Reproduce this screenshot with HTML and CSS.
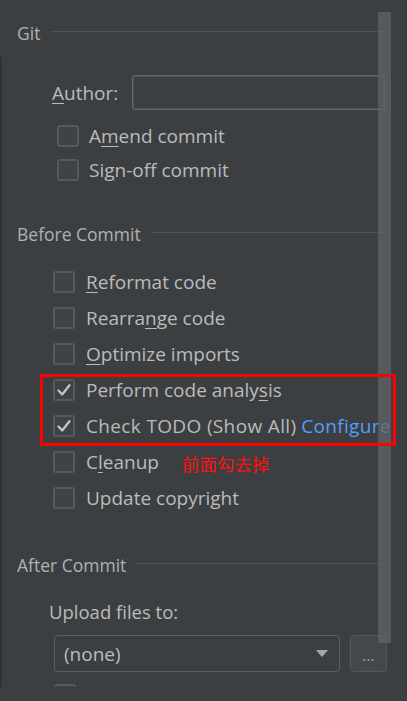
FILE: index.html
```html
<!DOCTYPE html>
<html>
<head>
<meta charset="utf-8">
<link rel="stylesheet" href="styles.css">
</head>
<body>
<div class="viewport">
  <div class="sect-head git-head"><span class="sect-title">Git</span></div>
  <div class="panel">
    <div class="author-row">
      <span class="author-label"><u>A</u>uthor:</span>
      <div class="text-input"></div>
    </div>
    <div class="git-opts">
      <div class="opt git-opt"><span class="cb"></span><span class="opt-text">A<u>m</u>end commit</span></div>
      <div class="opt git-opt"><span class="cb"></span><span class="opt-text">Si<u>g</u>n-off commit</span></div>
    </div>

    <div class="sect-head before-head"><span class="sect-title">Before Commit</span></div>
    <div class="before-opts">
      <div class="opt"><span class="cb"></span><span class="opt-text"><u>R</u>eformat code</span></div>
      <div class="opt"><span class="cb"></span><span class="opt-text">Rearra<u>n</u>ge code</span></div>
      <div class="opt"><span class="cb"></span><span class="opt-text"><u>O</u>ptimize imports</span></div>
      <div class="opt"><span class="cb checked"><svg viewBox="0 0 22 22" width="22" height="22"><path d="M5.5 11.5 L9.2 15.5 L16.5 6.2" fill="none" stroke="#c4c6c8" stroke-width="2.2" stroke-linecap="round" stroke-linejoin="round"/></svg></span><span class="opt-text">Perform code analy<u>s</u>is</span></div>
      <div class="opt"><span class="cb checked"><svg viewBox="0 0 22 22" width="22" height="22"><path d="M5.5 11.5 L9.2 15.5 L16.5 6.2" fill="none" stroke="#c4c6c8" stroke-width="2.2" stroke-linecap="round" stroke-linejoin="round"/></svg></span><span class="opt-text"><span class="todo">Check TODO (Show All)</span> <span class="link">Configure</span></span></div>
      <div class="opt"><span class="cb"></span><span class="opt-text">C<u>l</u>eanup</span><span class="note">前面勾去掉</span></div>
      <div class="opt"><span class="cb"></span><span class="opt-text">Update copyright</span></div>
    </div>

    <div class="sect-head after-head"><span class="sect-title">After Commit</span></div>
    <div class="upload-label">Upload files to:</div>
    <div class="upload-row">
      <div class="combo"><span class="combo-text">(none)</span><span class="combo-arrow"></span></div>
      <div class="dots-btn">...</div>
    </div>
    <div class="opt cut-row"><span class="cb"></span></div>
  </div>
  <div class="scrollbar"></div>
  <div class="red-box"></div>
</div>
</body>
</html>
```
FILE: styles.css
```css
* { box-sizing: border-box; }
html, body { margin: 0; padding: 0; }
body {
  background: #3c3f41;
  color: #bbbbbb;
  font-family: "Open Sans", "Noto Sans CJK SC", sans-serif;
  width: 407px;
  height: 701px;
  overflow: hidden;
}
u {
  text-decoration-thickness: 1px;
  text-underline-offset: 3px;
}
.viewport {
  position: relative;
  height: 687px;
  overflow: hidden;
}
.sect-head {
  display: flex;
  align-items: flex-start;
  height: 20px;
  font-size: 17.5px;
  line-height: 20px;
  color: #afb1b3;
  margin-right: 19px;
}
.sect-head::after {
  content: "";
  flex: 1;
  border-top: 1px solid #505355;
  margin-top: 8px;
  margin-left: 10px;
}
.git-head {
  margin-top: 23px;
  padding-left: 17px;
}
.panel {
  display: flow-root;
  margin-top: 14px;
  padding-top: 18px;
  border-left: 2px solid #2f3133;
  height: 640px;
}
.author-row {
  display: flex;
  align-items: center;
  height: 35px;
  padding-left: 50px;
  padding-right: 22px;
  font-size: 19px;
}
.author-label {
  width: 80px;
}
.text-input {
  flex: 1;
  height: 35px;
  border: 1px solid #646769;
  box-shadow: inset 0 0 0 1px #4d5052;
  border-radius: 2px;
}
.git-opts {
  margin-top: 9px;
  padding-left: 55px;
}
.opt {
  display: flex;
  align-items: center;
  height: 36px;
  font-size: 19px;
}
.git-opt {
  height: 34px;
}
.cb {
  width: 22px;
  height: 22px;
  flex: none;
  border: 2px solid #55595b;
  background: #404345;
  border-radius: 3px;
  display: flex;
  align-items: center;
  justify-content: center;
}
.cb svg { display: block; margin: -2px; }
.opt-text {
  margin-left: 11px;
  white-space: nowrap;
}
.todo { letter-spacing: 0.35px; }
.git-opt .opt-text { margin-left: 10px; }
.link { color: #589df6; letter-spacing: 0.3px; }
.note {
  margin-left: 23px;
  color: #ff1010;
  font-family: "Noto Sans CJK SC", sans-serif;
  font-size: 17.5px;
  margin-top: 2px;
}
.before-head {
  margin-top: 37px;
  padding-left: 15px;
}
.before-opts {
  margin-top: 20px;
  padding-left: 51px;
}
.after-head {
  margin-top: 39px;
  padding-left: 15px;
}
.upload-label {
  margin-top: 25px;
  padding-left: 47px;
  font-size: 18.5px;
  line-height: 24px;
  height: 24px;
}
.upload-row {
  display: flex;
  margin-top: 11px;
  padding-left: 52px;
  gap: 10px;
}
.combo {
  width: 286px;
  height: 37px;
  border: 1px solid #5d6062;
  border-radius: 4px;
  display: flex;
  align-items: center;
  justify-content: space-between;
  padding: 0 11px 0 9px;
  font-size: 19px;
}
.combo-arrow {
  width: 0;
  height: 0;
  border-left: 6.5px solid transparent;
  border-right: 6.5px solid transparent;
  border-top: 7px solid #a4a7a9;
}
.dots-btn {
  width: 37px;
  height: 37px;
  border: 1px solid #55585a;
  background: #45484a;
  border-radius: 4px;
  color: #9fb0c0;
  font-size: 14px;
  line-height: 40px;
  text-align: center;
  letter-spacing: 0.5px;
}
.cut-row {
  margin-top: 12px;
  padding-left: 52px;
  height: 22px;
}
.scrollbar {
  position: absolute;
  left: 378px;
  top: 12px;
  width: 13px;
  height: 631px;
  background: rgba(98, 100, 102, 0.72);
  border-radius: 1px;
}
.red-box {
  position: absolute;
  left: 40px;
  top: 374px;
  width: 356px;
  height: 72px;
  border: 3px solid #ff0000;
}
```
